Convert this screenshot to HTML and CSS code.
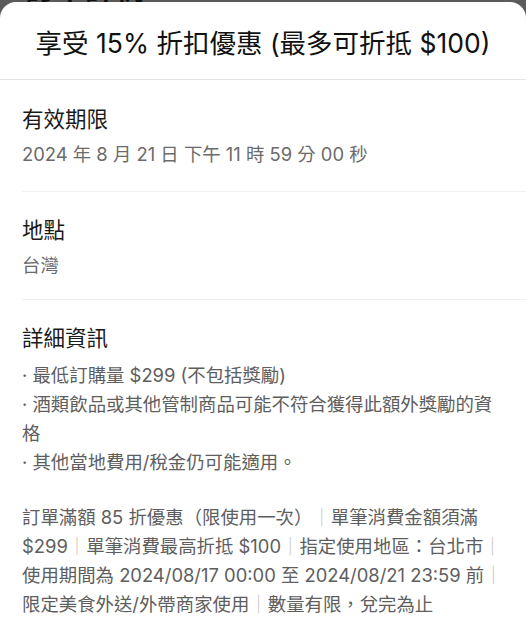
FILE: index.html
```html
<!DOCTYPE html>
<html lang="zh-Hant">
<head>
<meta charset="utf-8">
<title>優惠詳情</title>
<link rel="stylesheet" href="styles.css">
</head>
<body>
<div class="backdrop"><span class="backdrop-title">訂單詳情</span></div>
<div class="sheet">
  <header class="sheet-header">
    <h1 class="sheet-title">享受 15% 折扣優惠 (最多可折抵 $100)</h1>
  </header>
  <section class="section">
    <h2 class="section-heading">有效期限</h2>
    <p class="section-text">2024 年 8 月 21 日 下午 11 時 59 分 00 秒</p>
  </section>
  <section class="section section-short">
    <h2 class="section-heading">地點</h2>
    <p class="section-text">台灣</p>
  </section>
  <section class="section section-last">
    <h2 class="section-heading">詳細資訊</h2>
    <ul class="bullets">
      <li>· 最低訂購量 $299 (不包括獎勵)</li>
      <li>· 酒類飲品或其他管制商品可能不符合獲得此額外獎勵的資格</li>
      <li>· 其他當地費用/稅金仍可能適用。</li>
    </ul>
    <p class="terms">訂單滿額 85 折優惠（限使用一次）<span class="sep">｜</span>單筆消費金額須滿 $299<span class="sep">｜</span>單筆消費最高折抵 $100<span class="sep">｜</span>指定使用地區：台北市<span class="sep">｜</span>使用期間為 2024/08/17 00:00 至 2024/08/21 23:59 前<span class="sep">｜</span>限定美食外送/外帶商家使用<span class="sep">｜</span>數量有限，兌完為止</p>
  </section>
</div>
</body>
</html>
```

FILE: styles.css
```css
* { box-sizing: border-box; }
html, body { margin: 0; padding: 0; }
body {
  background: #5b5b5b;
  font-family: Inter, "Noto Sans CJK TC", sans-serif;
  height: 640px;
  overflow: hidden;
}
.backdrop {
  height: 2px;
  overflow: hidden;
  padding-left: 25px;
}
.backdrop-title {
  display: block;
  font-size: 30px;
  font-weight: 700;
  line-height: 30px;
  color: #111;
  margin-top: -27px;
}
.sheet {
  background: #fff;
  border-radius: 16px 16px 0 0;
  height: 638px;
}
.sheet-header {
  height: 78px;
  border-bottom: 1px solid #e4e4e4;
  display: flex;
  align-items: center;
  justify-content: center;
}
.sheet-title {
  margin: 0;
  font-size: 26.5px;
  font-weight: 400;
  color: #111;
  padding-top: 2px;
  white-space: nowrap;
}
.section {
  margin-left: 22px;
  padding: 26px 22px 22px 0;
  border-bottom: 1px solid #f0f0f0;
}
.section-short { padding-top: 25px; padding-bottom: 19px; }
.section-last { border-bottom: none; padding-top: 25px; }
.section-heading {
  margin: 0;
  font-size: 21.5px;
  line-height: 26px;
  font-weight: 400;
  color: #1a1a1a;
}
.section-text {
  margin: 8px 0 0;
  font-size: 18.4px;
  line-height: 29px;
  color: #6b6b6b;
}
.bullets {
  list-style: none;
  margin: 10px 0 0;
  padding: 0;
  font-size: 18.4px;
  line-height: 29px;
  color: #5e5e5e;
}
.terms {
  margin: 26px 0 0;
  font-size: 18.4px;
  line-height: 29px;
  color: #5e5e5e;
}
.sep { color: #c4c4c4; }
```
